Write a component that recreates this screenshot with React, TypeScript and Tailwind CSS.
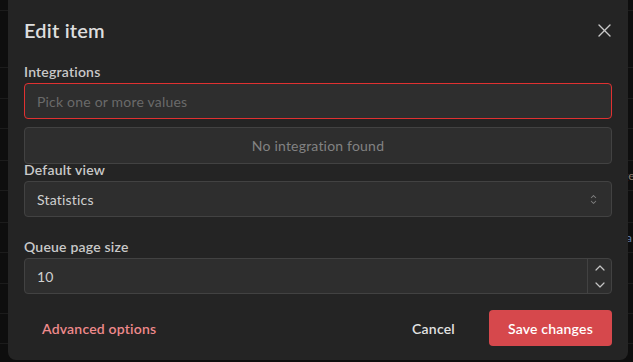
import React from "react";

const rows = [11, 57, 31, 30, 32, 30, 32, 30, 31, 30, 30];

const CaretSort = () => (
  <svg width="15" height="15" viewBox="0 0 15 15" fill="#828282">
    <path d="M4.93179 5.43179C4.75605 5.60753 4.75605 5.89245 4.93179 6.06819C5.10753 6.24392 5.39245 6.24392 5.56819 6.06819L7.49999 4.13638L9.43179 6.06819C9.60753 6.24392 9.89245 6.24392 10.0682 6.06819C10.2439 5.89245 10.2439 5.60753 10.0682 5.43179L7.81819 3.18179C7.73379 3.0974 7.61933 3.04999 7.49999 3.04999C7.38064 3.04999 7.26618 3.0974 7.18179 3.18179L4.93179 5.43179ZM10.0682 9.56819C10.2439 9.39245 10.2439 9.10753 10.0682 8.93179C9.89245 8.75606 9.60753 8.75606 9.43179 8.93179L7.49999 10.8636L5.56819 8.93179C5.39245 8.75606 5.10753 8.75606 4.93179 8.93179C4.75605 9.10753 4.75605 9.39245 4.93179 9.56819L7.18179 11.8182C7.26618 11.9026 7.38064 11.95 7.49999 11.95C7.61933 11.95 7.73379 11.9026 7.81819 11.8182L10.0682 9.56819Z" />
  </svg>
);

const Chevron = ({ up }: { up?: boolean }) => (
  <svg width="10" height="6" viewBox="0 0 10 6" fill="none" stroke="#c4c4c4" strokeWidth="1.2" strokeLinecap="round" strokeLinejoin="round">
    {up ? <polyline points="1,5 5,1 9,5" /> : <polyline points="1,1 5,5 9,1" />}
  </svg>
);

const Label = ({ children, className = "" }: { children: React.ReactNode; className?: string }) => (
  <div className={`text-[14px] leading-[23px] font-semibold text-[#c9c9c9] ${className}`}>{children}</div>
);

export default function App() {
  return (
    <div className="relative w-[633px] h-[362px] overflow-hidden bg-[#0e0e0e] font-['Lato',sans-serif] tracking-[0.2px]">
      {/* table behind the overlay */}
      <div className="flex flex-col">
        {rows.map((h, i) => (
          <div key={i} style={{ height: h }} className="border-b border-[#1c1c1c] flex items-center whitespace-nowrap text-[12px]">
            {i === 5 && <span className="ml-[622px] text-[#8a7a6a]">ge</span>}
            {i === 7 && <span className="ml-[626px] text-[#5f7fae]">a</span>}
          </div>
        ))}
      </div>

      {/* modal */}
      <div className="absolute left-[8px] top-0 w-[620px] h-[360px] bg-[#242424] rounded-b-[8px] px-4">
        <div className="h-[60px] flex items-center justify-between">
          <h2 className="text-[20px] font-semibold text-[#dedede]">Edit item</h2>
          <button className="w-[28px] h-[28px] flex items-center justify-center mr-[-6px]">
            <svg width="13" height="13" viewBox="0 0 13 13" stroke="#c9c9c9" strokeWidth="1.4" strokeLinecap="round">
              <line x1="1" y1="1" x2="12" y2="12" />
              <line x1="12" y1="1" x2="1" y2="12" />
            </svg>
          </button>
        </div>

        <Label>Integrations</Label>
        <div className="relative">
          <div className="h-[36px] rounded-[4px] border border-[#e03131] bg-[#2e2e2e] px-3 flex items-center text-[14px] text-[#6a6a6a]">
            Pick one or more values
          </div>
          <div className="absolute left-0 right-0 top-[44px] h-[37px] rounded-[4px] border border-[#424242] bg-[#2e2e2e] flex items-center justify-center text-[14px] text-[#828282] z-10">
            No integration found
          </div>
        </div>

        <Label className="mt-[39px]">Default view</Label>
        <div className="h-[36px] rounded-[4px] border border-[#424242] bg-[#2e2e2e] pl-3 flex items-center justify-between text-[14px] text-[#d0d0d0]">
          <span>Statistics</span>
          <span className="w-[36px] flex items-center justify-center">
            <CaretSort />
          </span>
        </div>

        <Label className="mt-[18px]">Queue page size</Label>
        <div className="h-[36px] rounded-[4px] border border-[#424242] bg-[#2e2e2e] pl-3 flex items-center justify-between text-[14px] text-[#d0d0d0]">
          <span>10</span>
          <div className="w-[24px] h-full border-l border-[#424242] flex flex-col">
            <div className="flex-1 flex items-center justify-center">
              <Chevron up />
            </div>
            <div className="flex-1 flex items-center justify-center">
              <Chevron />
            </div>
          </div>
        </div>

        <div className="mt-[16px] flex items-center justify-between">
          <button className="h-[36px] px-[18px] text-[14px] font-semibold text-[#ef8a8c]">Advanced options</button>
          <div className="flex items-center gap-4">
            <button className="h-[36px] px-[18px] text-[14px] font-semibold text-[#e2e2e2]">Cancel</button>
            <button className="h-[36px] px-[19px] rounded-[4px] bg-[#d6484c] text-[14px] font-semibold text-white">Save changes</button>
          </div>
        </div>
      </div>
    </div>
  );
}
